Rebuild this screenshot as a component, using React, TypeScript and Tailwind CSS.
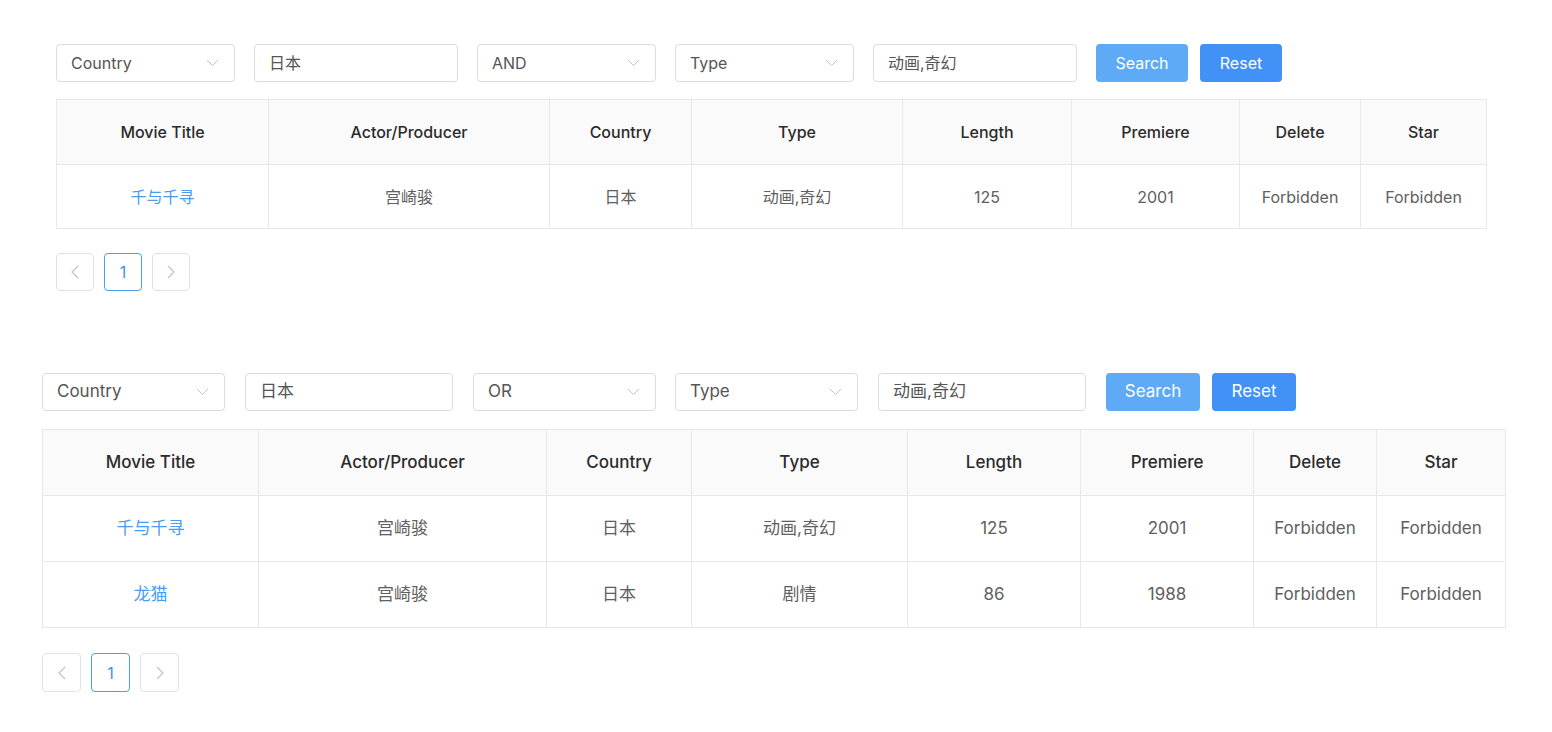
import React from "react";

type Row = { title: string; actor: string; country: string; type: string; length: string; premiere: string };

const ROWS_A: Row[] = [
  { title: "千与千寻", actor: "宫崎骏", country: "日本", type: "动画,奇幻", length: "125", premiere: "2001" },
];

const ROWS_B: Row[] = [
  { title: "千与千寻", actor: "宫崎骏", country: "日本", type: "动画,奇幻", length: "125", premiere: "2001" },
  { title: "龙猫", actor: "宫崎骏", country: "日本", type: "剧情", length: "86", premiere: "1988" },
];

const HEADERS = ["Movie Title", "Actor/Producer", "Country", "Type", "Length", "Premiere", "Delete", "Star"];

const FONT = "font-['Inter','Noto_Sans_CJK_SC',sans-serif]";

function Chevron() {
  return (
    <svg width="13" height="8" viewBox="0 0 13 8" fill="none" className="shrink-0">
      <path d="M1 1l5.5 5.5L12 1" stroke="#c4c4c4" strokeWidth="1" />
    </svg>
  );
}

function Select({ label, w }: { label: string; w: string }) {
  return (
    <div className={`${w} h-[38px] flex items-center justify-between pl-[14px] pr-[15px] border border-[#dcdcdc] rounded-[4px] bg-white text-[#555]`}>
      <span>{label}</span>
      <Chevron />
    </div>
  );
}

function Input({ value, w }: { value: string; w: string }) {
  return (
    <div className={`${w} h-[38px] flex items-center px-[14px] border border-[#dcdcdc] rounded-[4px] bg-white text-[#555]`}>
      {value}
    </div>
  );
}

function Pager({ size }: { size: string }) {
  const box = `${size} flex items-center justify-center rounded-[4px] border`;
  return (
    <div className="flex gap-[10px]">
      <div className={`${box} border-[#e2e2e2]`}>
        <svg width="8" height="14" viewBox="0 0 8 14" fill="none"><path d="M7 1L1 7l6 6" stroke="#c0c0c0" strokeWidth="1.1" /></svg>
      </div>
      <div className={`${box} border-[#4a9ff5] text-[#3e8ef0] text-[16px]`}>1</div>
      <div className={`${box} border-[#e2e2e2]`}>
        <svg width="8" height="14" viewBox="0 0 8 14" fill="none"><path d="M1 1l6 6-6 6" stroke="#c0c0c0" strokeWidth="1.1" /></svg>
      </div>
    </div>
  );
}

function MovieTable({ rows, cols, rowH, headH }: { rows: Row[]; cols: number[]; rowH: string; headH: string }) {
  return (
    <table className="table-fixed border-collapse border border-[#e8e8e8]">
      <colgroup>
        {cols.map((c, i) => (
          <col key={i} style={{ width: c }} />
        ))}
      </colgroup>
      <thead>
        <tr className={`${headH} bg-[#fafafa]`}>
          {HEADERS.map((h) => (
            <th key={h} className="border border-[#e8e8e8] font-medium text-[#2b2b2b] text-center p-0">
              {h}
            </th>
          ))}
        </tr>
      </thead>
      <tbody>
        {rows.map((r, i) => (
          <tr key={i} className={`${rowH} bg-white text-[#606060]`}>
            <td className="border border-[#e8e8e8] text-center text-[#4a9cf3]">{r.title}</td>
            <td className="border border-[#e8e8e8] text-center">{r.actor}</td>
            <td className="border border-[#e8e8e8] text-center">{r.country}</td>
            <td className="border border-[#e8e8e8] text-center">{r.type}</td>
            <td className="border border-[#e8e8e8] text-center">{r.length}</td>
            <td className="border border-[#e8e8e8] text-center">{r.premiere}</td>
            <td className="border border-[#e8e8e8] text-center">Forbidden</td>
            <td className="border border-[#e8e8e8] text-center">Forbidden</td>
          </tr>
        ))}
      </tbody>
    </table>
  );
}

export default function App() {
  return (
    <div className={`${FONT} w-[1552px] h-[732px] bg-white overflow-hidden`}>
      {/* First block: AND filter */}
      <section className="pl-[56px] pt-[44px] text-[16px]">
        <div className="flex items-center">
          <Select label="Country" w="w-[179px]" />
          <div className="w-[19px]" />
          <Input value="日本" w="w-[204px]" />
          <div className="w-[19px]" />
          <Select label="AND" w="w-[179px]" />
          <div className="w-[19px]" />
          <Select label="Type" w="w-[179px]" />
          <div className="w-[19px]" />
          <Input value="动画,奇幻" w="w-[204px]" />
          <div className="w-[19px]" />
          <button className="w-[92px] h-[38px] rounded-[4px] bg-[#5eaaf6] text-white">Search</button>
          <div className="w-[12px]" />
          <button className="w-[82px] h-[38px] rounded-[4px] bg-[#4191f6] text-white">Reset</button>
        </div>
        <div className="mt-[17px]">
          <MovieTable rows={ROWS_A} cols={[212, 281, 142, 211, 169, 168, 121, 126]} headH="h-[65px]" rowH="h-[64px]" />
        </div>
        <div className="mt-[24px]">
          <Pager size="w-[38px] h-[38px]" />
        </div>
      </section>

      {/* Second block: OR filter */}
      <section className="pl-[42px] mt-[82px] text-[17px]">
        <div className="flex items-center">
          <Select label="Country" w="w-[183px]" />
          <div className="w-[20px]" />
          <Input value="日本" w="w-[208px]" />
          <div className="w-[20px]" />
          <Select label="OR" w="w-[183px]" />
          <div className="w-[19px]" />
          <Select label="Type" w="w-[183px]" />
          <div className="w-[20px]" />
          <Input value="动画,奇幻" w="w-[208px]" />
          <div className="w-[20px]" />
          <button className="w-[94px] h-[38px] rounded-[4px] bg-[#5eaaf6] text-white">Search</button>
          <div className="w-[12px]" />
          <button className="w-[84px] h-[38px] rounded-[4px] bg-[#4191f6] text-white">Reset</button>
        </div>
        <div className="mt-[18px]">
          <MovieTable rows={ROWS_B} cols={[216, 288, 145, 216, 173, 173, 123, 129]} headH="h-[66px]" rowH="h-[66px]" />
        </div>
        <div className="mt-[25px]">
          <Pager size="w-[39px] h-[39px]" />
        </div>
      </section>
    </div>
  );
}
